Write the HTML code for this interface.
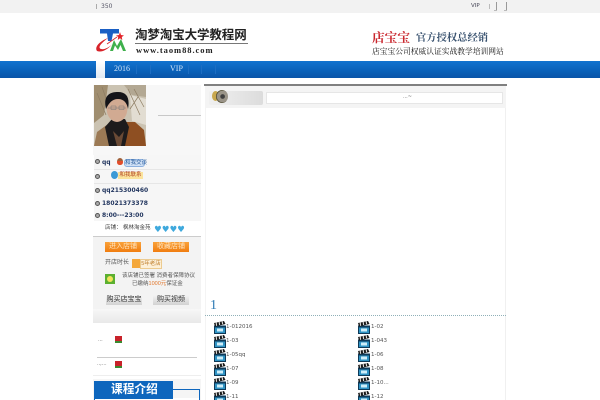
<!DOCTYPE html>
<html lang="zh"><head><meta charset="utf-8"><title>淘梦淘宝大学教程网</title>
<style>
html,body{margin:0;padding:0;background:#fff;width:600px;height:400px;overflow:hidden}
body{position:relative;font-family:"DejaVu Sans","Noto Sans CJK SC",sans-serif;font-size:6px;color:#444;filter:blur(.3px)}
.a{position:absolute;white-space:nowrap;line-height:1}
.b{position:absolute}
.cn{font-family:"Liberation Sans","Noto Sans CJK SC",sans-serif}
.serif{font-family:"Liberation Serif","Noto Serif CJK SC",serif}
.row{position:absolute;left:94px;width:107px;height:13px;background:#f6f6f6;border-bottom:1px solid #e6e6e6}
.row b{position:absolute;left:8px;top:3px;font-size:6px;line-height:7px;color:#22365f}
.row i{position:absolute;left:1px;top:4px;width:3px;height:3px;border-radius:50%;background:#aaa;border:1px solid #555}
.orange{position:absolute;height:10px;width:36px;background:linear-gradient(#f9a23a,#f07d10);color:#ffe3bd;font-size:7px;line-height:10px;text-align:center}
.gbtn{position:absolute;height:10px;width:36px;background:linear-gradient(#f4f4f4,#d2d2d2);color:#333;font-size:7px;line-height:10px;text-align:center}
.file{position:absolute;font-size:5.5px;line-height:7px;color:#555}
svg.c{position:absolute;width:12px;height:13px}
</style></head><body>
<svg width="0" height="0" style="position:absolute"><defs><g id="clap"><rect x="0" y="4.5" width="12" height="8.5" fill="#0f3a58"/><rect x="1" y="6.5" width="10" height="5.5" fill="#2f93c4"/><rect x="3" y="7.5" width="6" height="3" fill="#cfeef9"/><path d="M0 2 L10 0 L11.5 3 L1 5.5 Z" fill="#1a1a1a"/><path d="M2.6 4.8 L2.2 1.6 M5.6 4 L5.2 1 M8.6 3.2 L8.2 .4" stroke="#ddd" stroke-width="1.1"/></g></defs></svg>

<!-- top bar -->
<div class="b" style="left:0;top:0;width:600px;height:13px;background:#f2f2f2"></div>
<div class="b" style="left:96px;top:4px;width:1px;height:5px;background:#aaa"></div>
<div class="a" style="left:101px;top:3.5px;font-size:6px;color:#556">350</div>
<div class="a" style="left:471px;top:3.5px;font-size:5.5px;color:#445">VIP</div>
<div class="b" style="left:489px;top:4px;width:1px;height:5px;background:#bbb"></div>
<div class="b" style="left:496px;top:2px;width:1px;height:9px;background:#999"></div>
<div class="b" style="left:494px;top:10px;width:3px;height:1px;background:#bbb"></div>
<div class="b" style="left:506px;top:2px;width:1px;height:9px;background:#999"></div>
<div class="b" style="left:504px;top:10px;width:3px;height:1px;background:#bbb"></div>

<!-- logo -->
<svg class="b" style="left:95px;top:27px" width="34" height="27" viewBox="0 0 34 27">
<path d="M5 2H24V6.5H18L16.5 14H13L12 6.5H5Z" fill="#1a5fc4"/>
<path d="M2 24C-1 20 5 14 13 11C8 15 3 19 5 21.5C8 23.5 13 21 17 17.5C13 22 7 26 2 24Z" fill="#d8232a"/>
<path d="M15 24L19 13L22 19L26 12L31 24H28L25.5 18L23 23L20 18.5L18 24Z" fill="#3fb04c"/>
<path d="M25 5L26 8L29 8.5L26.8 10L27.3 13L25 11.3L22.7 13L23.2 10L21 8.5L24 8Z" fill="#e3242b"/>
<path d="M12 17L22 10" stroke="#d8232a" stroke-width=".8"/>
</svg>
<div class="a cn" style="left:135px;top:28.5px;font-size:12.5px;font-weight:bold;color:#222;letter-spacing:-.1px">淘梦淘宝大学教程网</div>
<div class="b" style="left:135px;top:43px;width:113px;height:1px;background:#777"></div>
<div class="a serif" style="left:136px;top:45.5px;font-size:8.5px;font-weight:bold;color:#222;letter-spacing:.95px">www.taom88.com</div>

<div class="a serif" style="left:372px;top:32px;font-size:12.7px;color:#c9252c;font-weight:bold">店宝宝</div>
<div class="a serif" style="left:416px;top:34px;font-size:10.3px;font-weight:bold;color:#3a5370">官方授权总经销</div>
<div class="a serif" style="left:372px;top:48px;font-size:7.75px;color:#111">店宝宝公司权威认证实战教学培训网站</div>

<!-- nav -->
<div class="b" style="left:0;top:61px;width:600px;height:17px;background:linear-gradient(#1173cf,#0a60b8 60%,#0a54a8)"></div>
<div class="b" style="left:96px;top:61px;width:9px;height:17px;background:linear-gradient(#fff,#dfe8f2)"></div>
<div class="a serif" style="left:114px;top:65px;font-size:8px;color:#cfe2f6">2016</div>
<div class="a serif" style="left:170px;top:65px;font-size:8px;color:#cfe2f6">VIP</div>
<div class="b" style="left:136px;top:65px;width:1px;height:9px;background:#1d6dc2"></div>
<div class="b" style="left:150px;top:65px;width:1px;height:9px;background:#1d6dc2"></div>
<div class="b" style="left:188px;top:65px;width:1px;height:9px;background:#1d6dc2"></div>
<div class="b" style="left:201px;top:65px;width:1px;height:9px;background:#1d6dc2"></div>
<div class="b" style="left:215px;top:65px;width:1px;height:9px;background:#1d6dc2"></div>

<!-- left panel -->
<div class="b" style="left:93px;top:85px;width:108px;height:70px;background:#f7f7f7"></div>
<svg class="b" style="left:94px;top:85px" width="52" height="61" viewBox="0 0 52 61">
<rect width="52" height="61" fill="#cbc3b2"/>
<path d="M0 0H14L10 30L0 38Z" fill="#a08e70"/>
<path d="M30 0H52V12L38 10Z" fill="#b3a893"/>
<path d="M36 10L52 14V40L38 36Z" fill="#e2ddd2"/>
<path d="M3 8L12 30M8 2L15 22M34 4L46 30M40 4L50 22M44 12L36 24" stroke="#8d7c62" stroke-width=".7" fill="none"/>
<path d="M0 61L3 47L14 39L18 61Z" fill="#9c7a55"/>
<path d="M26 61L30 37L41 37L50 45L52 61Z" fill="#8e4f22"/>
<path d="M11 42L18 34H31L35 42L31 61H15Z" fill="#1d1b1c"/>
<path d="M19 46L23 61H27L30 46L25 52Z" fill="#6a4a35"/>
<ellipse cx="23" cy="23" rx="10.5" ry="14" fill="#d1aa92"/>
<path d="M12 24C9 11 15 7 24 7C33 7 36 13 34 24C33 18 30 14 24 14C18 14 15 18 12 24Z" fill="#141418"/>
<path d="M14 23H32M17 21h5v3.5h-5zM25 21h5v3.5h-5z" stroke="#777" stroke-width=".5" fill="none"/>
</svg>
<div class="b" style="left:158px;top:115px;width:43px;height:1px;background:#c8c8c8"></div>
<div class="row" style="top:155px;height:14px"><i></i><b style="top:4px">qq</b></div>
<div class="row" style="top:170px"><i></i></div>
<div class="row" style="top:184px"><i></i><b>qq215300460</b></div>
<div class="row" style="top:197px"><i></i><b>18021373378</b></div>
<div class="row" style="top:210px;height:11px"><i style="top:3px"></i><b style="top:2px">8:00---23:00</b></div>
<div class="b" style="left:117px;top:158px;width:6px;height:7px;border-radius:50% 50% 40% 40%;background:linear-gradient(#a0603a 45%,#e24d2b 45%)"></div>
<div class="a cn" style="left:124px;top:158.5px;width:19px;height:6.5px;background:#cfe0f5;border:.5px solid #8cb0de;border-radius:3px;font-size:5.5px;line-height:7px;color:#2a5d9c;text-align:center">和我交谈</div>
<div class="b" style="left:111px;top:171px;width:7px;height:8px;border-radius:50%;background:#3b9ad6"></div>
<div class="a cn" style="left:118px;top:172px;width:25px;height:7px;background:#fbe39c;font-size:5.5px;line-height:7px;color:#b04020;text-align:center">和我联系</div>

<div class="b" style="left:93px;top:221px;width:108px;height:15px;background:#fff;border-bottom:1px solid #ccc"></div>
<div class="a cn" style="left:105px;top:226px;font-size:5.5px;color:#444">店铺： 枫林淘金苑</div>
<div class="a" style="left:154px;top:225.5px;font-size:8.5px;color:#3fa9dd;letter-spacing:.1px">♥♥♥♥</div>
<div class="b" style="left:93px;top:237px;width:108px;height:72px;background:#f3f3f3"></div>
<div class="orange cn" style="left:105px;top:242px">进入店铺</div>
<div class="orange cn" style="left:153px;top:242px">收藏店铺</div>
<div class="a cn" style="left:105px;top:260px;font-size:6px;color:#555">开店时长</div>
<div class="b" style="left:132px;top:259px;width:8px;height:9px;background:#f4a83c"></div>
<div class="a cn" style="left:140px;top:259px;width:20px;height:8px;background:#fdf0d8;border:.5px solid #eccb90;font-size:5.5px;line-height:8px;color:#c08030;text-align:center">5年老店</div>
<div class="b" style="left:105px;top:274px;width:10px;height:10px;background:#5cb030"></div>
<div class="b" style="left:107px;top:276px;width:6px;height:6px;border-radius:50%;background:#f3e35c"></div>
<div class="a cn" style="left:122px;top:274px;font-size:5.5px;color:#555">该店铺已签署 消费者保障协议</div>
<div class="a cn" style="left:132px;top:282px;font-size:5.5px;color:#555">已缴纳<span style="color:#e0752a">1000元</span>保证金</div>
<div class="gbtn cn" style="left:106px;top:295px">购买店宝宝</div>
<div class="gbtn cn" style="left:153px;top:295px">购买视频</div>

<div class="b" style="left:93px;top:309px;width:108px;height:14px;background:linear-gradient(#f7f7f7,#e8e8e8)"></div>
<div class="b" style="left:93px;top:323px;width:108px;height:52px;background:#fff;border-bottom:1px solid #eee"></div>
<div class="a" style="left:98px;top:338px;font-size:5px;color:#666">...</div>
<div class="b" style="left:115px;top:336px;width:7px;height:7px;background:linear-gradient(#c8222a 70%,#3a8a30 70%)"></div>
<div class="b" style="left:97px;top:357px;width:100px;height:1px;background:#ccc"></div>
<div class="a" style="left:97px;top:362px;font-size:5px;color:#666">..,...</div>
<div class="b" style="left:115px;top:361px;width:7px;height:7px;background:linear-gradient(#c8222a 70%,#3a8a30 70%)"></div>

<div class="b" style="left:93px;top:379px;width:108px;height:21px;background:#f5f5f5"></div>
<div class="b" style="left:94px;top:398px;width:106px;height:2px;background:#fff"></div>
<div class="b" style="left:94px;top:381px;width:79px;height:18px;background:#0e66bd"></div>
<div class="b" style="left:94px;top:399px;width:1px;height:1px;background:#0e66bd"></div>
<div class="b" style="left:173px;top:389px;width:27px;height:1px;background:#0e66bd"></div>
<div class="b" style="left:199px;top:389px;width:1px;height:11px;background:#0e66bd"></div>
<div class="a cn" style="left:111px;top:384px;font-size:11.7px;font-weight:bold;color:#fff">课程介绍</div>

<!-- right panel -->
<div class="b" style="left:204px;top:84px;width:303px;height:2px;background:#808080"></div>
<div class="b" style="left:205px;top:86px;width:301px;height:22px;background:#f4f4f4"></div>
<div class="b" style="left:205px;top:108px;width:301px;height:292px;background:#fff;border-left:1px solid #f4f4f4;border-right:1px solid #f0f0f0;box-sizing:border-box"></div>
<div class="b" style="left:209px;top:91px;width:54px;height:14px;background:linear-gradient(90deg,#f0f0f0,#dcdcdc);border-radius:2px"></div>
<div class="b" style="left:212px;top:91px;width:7px;height:10px;border-radius:50%;background:#c9a84e"></div>
<div class="b" style="left:216px;top:90px;width:12px;height:13px;border-radius:50%;background:radial-gradient(circle at 55% 50%,#3f3f3f 0 22%,#9a9488 28% 60%,#4f4a30 66% 80%,#b88a25 85%)"></div>
<div class="b" style="left:266px;top:92px;width:237px;height:12px;background:#fff;border:1px solid #e6e6e6;box-sizing:border-box"></div>
<div class="a" style="left:403px;top:95px;font-size:5px;color:#666">...~</div>

<div class="a serif" style="left:210px;top:299px;font-size:14px;color:#2f7bb5">1</div>
<div class="b" style="left:205px;top:315px;width:301px;height:0;border-top:1px dotted #8fb0b8"></div>

<svg class="c" style="left:214px;top:321px" viewBox="0 0 12 13"><use href="#clap"/></svg><div class="file" style="left:226px;top:324px">1-012016</div>
<svg class="c" style="left:358px;top:321px" viewBox="0 0 12 13"><use href="#clap"/></svg><div class="file" style="left:371px;top:324px">1-02</div>
<svg class="c" style="left:214px;top:335px" viewBox="0 0 12 13"><use href="#clap"/></svg><div class="file" style="left:226px;top:338px">1-03</div>
<svg class="c" style="left:358px;top:335px" viewBox="0 0 12 13"><use href="#clap"/></svg><div class="file" style="left:371px;top:338px">1-043</div>
<svg class="c" style="left:214px;top:349px" viewBox="0 0 12 13"><use href="#clap"/></svg><div class="file" style="left:226px;top:352px">1-05qq</div>
<svg class="c" style="left:358px;top:349px" viewBox="0 0 12 13"><use href="#clap"/></svg><div class="file" style="left:371px;top:352px">1-06</div>
<svg class="c" style="left:214px;top:363px" viewBox="0 0 12 13"><use href="#clap"/></svg><div class="file" style="left:226px;top:366px">1-07</div>
<svg class="c" style="left:358px;top:363px" viewBox="0 0 12 13"><use href="#clap"/></svg><div class="file" style="left:371px;top:366px">1-08</div>
<svg class="c" style="left:214px;top:377px" viewBox="0 0 12 13"><use href="#clap"/></svg><div class="file" style="left:226px;top:380px">1-09</div>
<svg class="c" style="left:358px;top:377px" viewBox="0 0 12 13"><use href="#clap"/></svg><div class="file" style="left:371px;top:380px">1-10...</div>
<svg class="c" style="left:214px;top:391px" viewBox="0 0 12 13"><use href="#clap"/></svg><div class="file" style="left:226px;top:394px">1-11</div>
<svg class="c" style="left:358px;top:391px" viewBox="0 0 12 13"><use href="#clap"/></svg><div class="file" style="left:371px;top:394px">1-12</div>
</body></html>
